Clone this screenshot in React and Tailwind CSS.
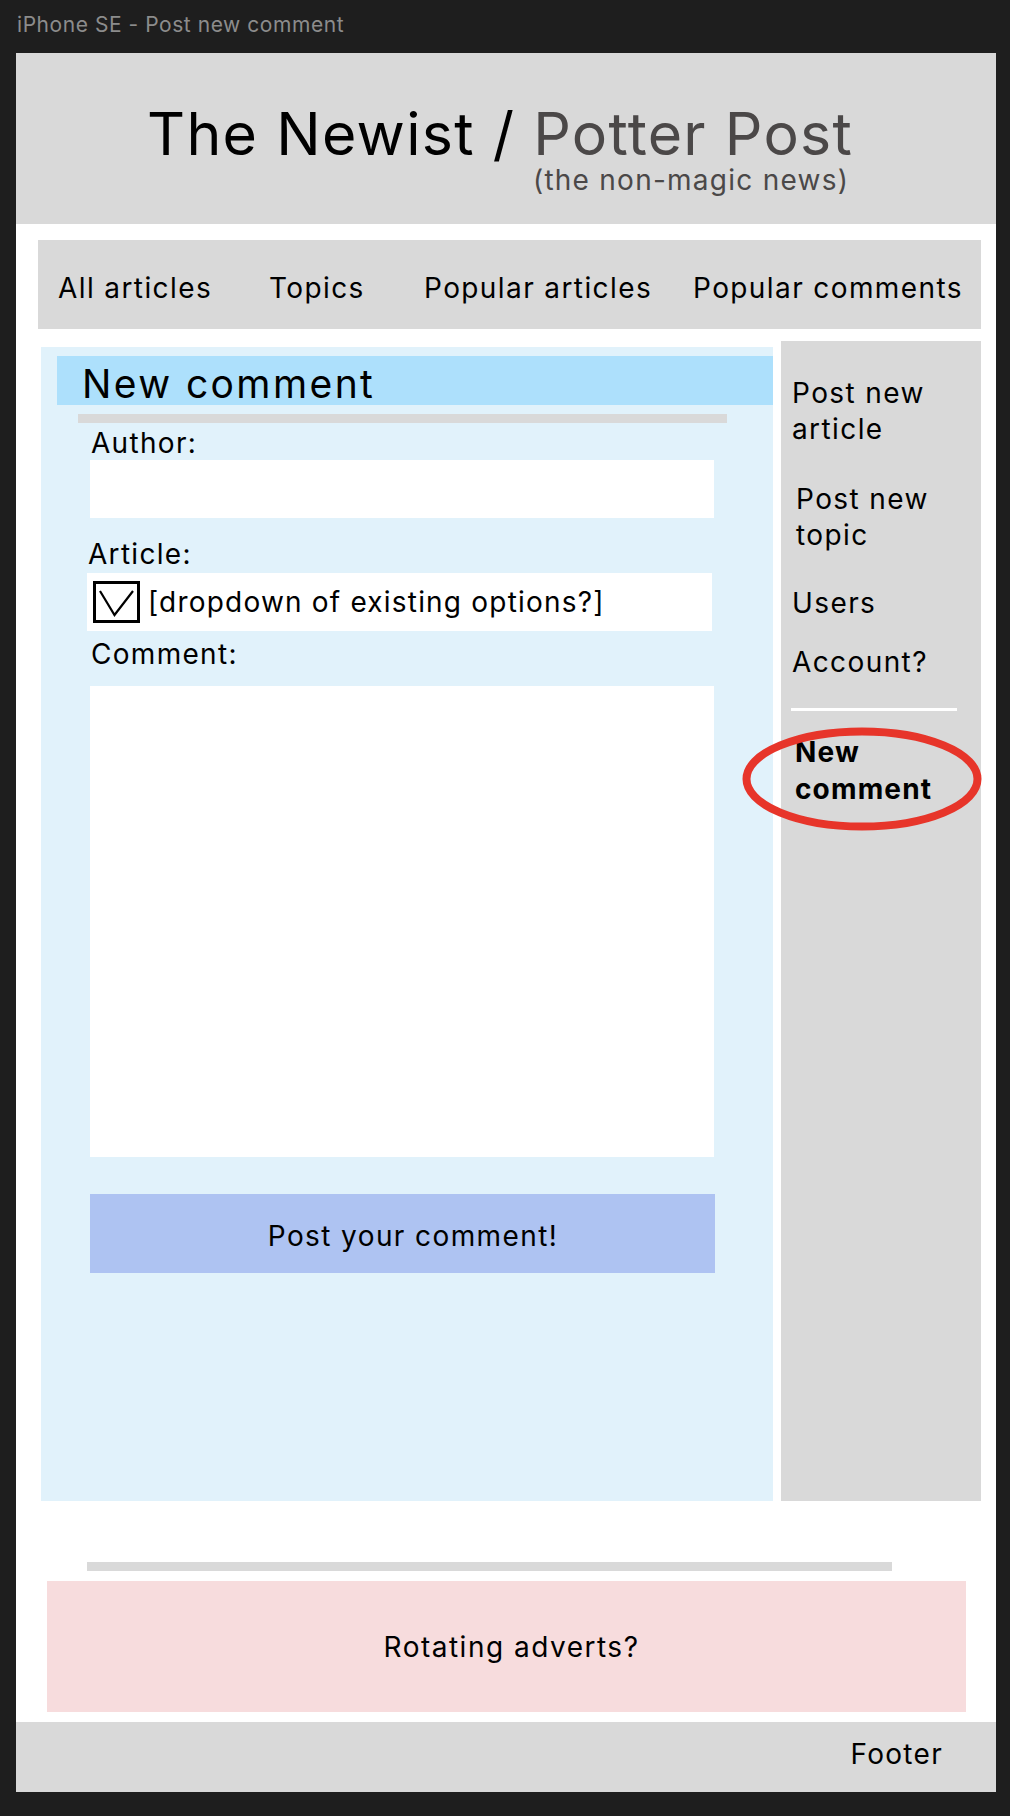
import React from 'react'

const navItems = [
    { label: 'All articles', w: 'w-[211px]' },
    { label: 'Topics', w: 'w-[155px]' },
    { label: 'Popular articles', w: 'w-[269px]' },
    { label: 'Popular comments', w: '' },
]

const App = () => {
    return (
        <div className="w-[1010px] min-h-[1816px] bg-[#1e1e1e] font-['Inter',sans-serif] text-black">
            <div className="h-[53px] pl-[17px] pt-[14px] text-[21px] leading-none tracking-[0.55px] text-[#8c8c8c]">
                iPhone SE - Post new comment
            </div>

            <div className="ml-[16px] w-[980px] bg-white">
                {/* Header */}
                <div className="h-[171px] bg-[#d9d9d9] pl-[131px] pt-[51px]">
                    <div className="inline-flex flex-col items-end">
                        <h1 className="h-[59px] text-[59px] leading-[59px] font-normal tracking-[1.3px] whitespace-nowrap">
                            <span className="inline-block">The Newist /&nbsp;</span>
                            <span className="inline-block text-[#4b4848]">Potter Post</span>
                        </h1>
                        <p className="mt-[3px] pr-[4px] text-[28px] leading-none tracking-[1.25px] text-[#4b4848]">(the non-magic news)</p>
                    </div>
                </div>

                {/* Nav */}
                <nav className="mt-[16px] ml-[22px] w-[943px] h-[89px] bg-[#d9d9d9] flex items-center pl-[20px] pt-[7px] text-[28px] leading-[34px] tracking-[1.4px] whitespace-nowrap">
                    {navItems.map(item => (
                        <span key={item.label} className={item.w}>{item.label}</span>
                    ))}
                </nav>

                {/* Main */}
                <div className="mt-[12px] ml-[25px] flex h-[1160px]">
                    <div className="w-[732px] mt-[6px] bg-[#e1f2fb] pt-[9px]">
                        <div className="ml-[16px] h-[49px] bg-[#ade0fc] pl-[25px] pt-[6px] text-[39px] leading-[43px] tracking-[2.4px]">
                            New comment
                        </div>
                        <div className="mt-[9px] ml-[37px] w-[649px] h-[9px] bg-[#d9d9d9]" />

                        <div className="text-[28px] leading-[34px] tracking-[1.3px]">
                            <div className="mt-[3px] ml-[50px]">Author:</div>
                            <div className="ml-[49px] w-[624px] h-[58px] bg-white" />

                            <div className="mt-[19px] ml-[47px]">Article:</div>
                            <div className="mt-[2px] ml-[46px] w-[625px] h-[58px] bg-white flex items-center pl-[6px]">
                                <div className="w-[47px] h-[42px] border-[3px] border-black shrink-0">
                                    <svg width="41" height="36" viewBox="0 0 41 36" fill="none">
                                        <path d="M4 7 L18.5 31 L37 7" stroke="black" strokeWidth="2.2" />
                                    </svg>
                                </div>
                                <span className="ml-[8px] whitespace-nowrap tracking-[1.2px]">[dropdown of existing options?]</span>
                            </div>

                            <div className="mt-[6px] ml-[50px]">Comment:</div>
                            <div className="mt-[15px] ml-[49px] w-[624px] h-[471px] bg-white" />

                            <button className="mt-[37px] ml-[49px] w-[625px] h-[79px] bg-[#aec3f2] flex items-center justify-center pl-[21px] pt-[5px] tracking-[1.4px]">
                                Post your comment!
                            </button>
                        </div>
                    </div>

                    {/* Sidebar */}
                    <aside className="relative ml-[8px] w-[200px] bg-[#d9d9d9] pt-[34px] text-[28px] leading-[36px] tracking-[1.4px]">
                        <div className="pl-[11px]">Post new<br />article</div>
                        <div className="mt-[34px] pl-[15px]">Post new<br />topic</div>
                        <div className="mt-[32px] pl-[11px]">Users</div>
                        <div className="mt-[23px] pl-[11px]">Account?</div>
                        <div className="mt-[28px] ml-[10px] w-[166px] h-[3px] bg-white" />
                        <div className="mt-[23px] pl-[14px] font-bold leading-[37px] tracking-[1.15px]">New<br />comment</div>

                        <svg className="absolute left-[-39px] top-[386px]" width="240" height="104" viewBox="0 0 240 104" fill="none">
                            <ellipse cx="120" cy="52" rx="115.5" ry="47.5" stroke="#e7352a" strokeWidth="8" />
                        </svg>
                    </aside>
                </div>

                {/* Adverts */}
                <div className="mt-[61px] ml-[71px] w-[805px] h-[9px] bg-[#d9d9d9]" />
                <div className="mt-[10px] ml-[31px] w-[919px] h-[131px] bg-[#f7dcdd] flex items-center justify-center pl-[10px] text-[28px] leading-[34px] tracking-[1.5px]">
                    Rotating adverts?
                </div>

                {/* Footer */}
                <footer className="mt-[10px] h-[70px] bg-[#d9d9d9] flex items-center justify-end pr-[53px] pb-[6px] text-[28px] leading-[34px] tracking-[1.3px]">
                    Footer
                </footer>
            </div>
        </div>
    )
}

export default App
